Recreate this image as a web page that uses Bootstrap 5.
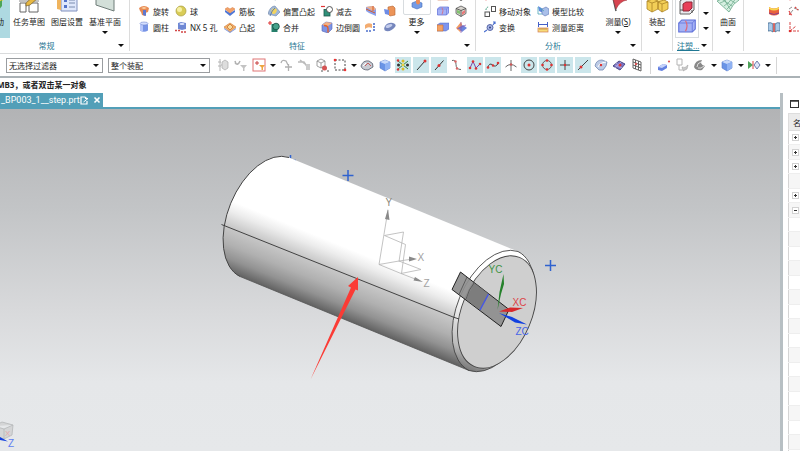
<!DOCTYPE html>
<html lang="zh">
<head>
<meta charset="utf-8">
<meta name="viewport" content="width=device-width, initial-scale=1">
<title>NX - _BP003_1__step.prt</title>
<link href="https://cdn.jsdelivr.net/npm/bootstrap@5.3.0/dist/css/bootstrap.min.css" rel="stylesheet">
<style>
body{font-family:"Noto Sans","Noto Sans CJK SC",sans-serif;font-size:8px;line-height:11px;color:#222;background:#fff}
button{background:none;border:0;padding:0;color:inherit;font:inherit;white-space:nowrap}
svg{display:block;flex:none}
.tri{width:0;height:0;border:3px solid transparent;border-top-color:#111;border-bottom:0;flex:none}
.ribbon{height:54px;border-bottom:1px solid #d9dbdc;overflow:hidden}
.grp{border-right:1px solid #dcdcdc;height:51px;flex:none}
.grp:last-child{border:0;flex:1 0 auto}
.grp-body{height:38px;display:flex;align-items:flex-end}
.grp-foot{height:15px;display:flex;align-items:center;color:#1f7793}
.grp-foot .tri{margin-right:5px}
.grp-foot a{color:inherit}
.g-home{width:155px;margin-left:-25px}
.g-feature{width:346px}
.g-analysis{width:166px}
.g-asm{width:31px}
.g-mold{width:40px}
.g-surf{width:31px}
.feature-cols,.analysis-cols{display:grid;padding-left:8px;align-items:end;align-content:end}
.feature-cols{grid-template-columns:37px 49px 44px 53px 44px 19px 19px 34px 18px 19px}
.analysis-cols{grid-template-columns:53px 62px 42px}
.stack-col{display:flex;flex-direction:column;padding-bottom:3px}
.stack-col button{height:16px;display:flex;align-items:center;gap:3px}
.ic{width:12px;height:12px}
.big{display:flex;flex-direction:column;align-items:center;justify-content:flex-end;width:38px;height:56px}
.big .pic{width:24px;height:24px;margin-bottom:3px}
.big i{height:11px;display:flex;align-items:center}
.big.cut{width:35px;background:#aed9e1;align-items:flex-end;padding-right:6px}
.big.narrow{width:30px}
.more .pic-box{border:1px solid #d8dcdf;border-radius:2px;padding:0 6px 4px;margin-bottom:1px}
.more .pic-box svg{width:14px;height:14px}
.more{width:27px}
.gallery{border:1px solid #d8dcdf;width:24px;display:flex;flex-direction:column;align-items:center;gap:2px;margin-left:2px;padding-bottom:2px}
.gallery svg{width:18px;height:18px}
.filterbar{height:24px;border-bottom:2px solid #aab2b6;padding-left:6px}
.filterbar select{width:97px;height:15px;border:1px solid #9a9da0;border-radius:0;padding:0 2px;font-size:8px;line-height:11px;color:#222;appearance:none;background:#fff}
.sel-box{display:grid;align-items:center;margin-right:5px}
.sel-box>*{grid-area:1/1}
.sel-box .tri{justify-self:end;margin-right:4px;pointer-events:none}
.sel-box.wide select{width:102px}
.tb{width:16px;height:16px;margin:0 1px;display:flex;align-items:center;justify-content:center;flex:none}
.tb.on{background:#cbe6eb}
.tb svg{width:14px;height:14px}
.tb-dd{width:9px;height:16px;display:flex;align-items:center;justify-content:center}
.vsep{width:1px;height:17px;background:#d6d6d6;margin:0 4px}
.prompt-line{height:15px;line-height:13px;font-weight:700;text-indent:-3px;white-space:nowrap;overflow:hidden}
.doc-tab{height:14px;background:#529fb8;color:#fff;font:9px/14px Roboto,"Noto Sans",sans-serif;width:103px;padding-left:1px}
.tabs-row{border-bottom:2px solid #529fb8;height:16px}
.scene-box{background:linear-gradient(#b2b3b5,#c3c5c7 30%,#d9dadc 60%,#e5e7e9 80%,#e6e8ea);overflow:hidden;position:relative}
.scene-box svg{position:absolute;inset:0;width:100%;height:100%}
.side{width:20px;border-left:3px solid #b7bfc3;overflow:hidden;flex:none}
.side-top{height:20px;padding:7px 0 0 7px}
.tree{margin-left:5px;border-left:1px solid #d4d4d4;width:60px;border-collapse:collapse}
.tree th{height:17px;background:#ebebeb;padding:1px 0 0 4px;font-weight:400;border:1px solid #ddd}
.tree td{height:14px;padding:0 0 0 3px;border-bottom:1px solid #eee;line-height:0}
.tree tr:nth-child(even) td{height:15px;background:#f6f6f6}
.twist{width:7px;height:7px;border:1px solid #d2d2d2;background:#fff;display:grid;place-items:center}
</style>
<script src="https://cdn.jsdelivr.net/npm/bootstrap@5.3.0/dist/js/bootstrap.bundle.min.js"></script>
</head>
<body class="d-flex flex-column vh-100 overflow-hidden">

<svg class="d-none" aria-hidden="true">
  <symbol id="revolve" viewBox="0 0 12 12"><path d="M1 3q5-4 10 0l-1 4-3 1v3l-3-1-1-3-1-1z" fill="#e88a52"/><path d="M5 5h3v6l-3-1z" fill="#5f78cf"/><path d="M3 3l3-1 3 1-3 1z" fill="#fbd3a6"/></symbol>
  <symbol id="cyl" viewBox="0 0 12 12"><path d="M2 2.500v7q4 2.500 8 0v-7z" fill="#7794e6"/><path d="M2 2.500v7l3 1.200v-8z" fill="#b7c7fa"/><ellipse cx="6" cy="2.500" rx="4" ry="1.500" fill="#d4defe" stroke="#7088d0" stroke-width=".6"/></symbol>
  <symbol id="ball" viewBox="0 0 12 12"><circle cx="6" cy="6" r="5" fill="#d9cc57" stroke="#a89c3d" stroke-width=".7"/><circle cx="4.500" cy="4.500" r="2.500" fill="#f6f0a4"/></symbol>
  <symbol id="hole" viewBox="0 0 12 12"><path d="M3 2l3-1 5 1v6l-4 1-4-1z" fill="#6f88d4"/><ellipse cx="7" cy="3" rx="2.500" ry="1" fill="#dfe6ff"/><path d="M0 9.500h5M6 11h5" stroke="#d24747" stroke-width="1.500" stroke-dasharray="2 1"/></symbol>
  <symbol id="rib" viewBox="0 0 12 12"><path d="M1 5l5 3 5-3v2l-5 4-5-4z" fill="#4f77d6"/><path d="M1 4l2.500-1.500L6 4l2.500-1.500L11 4 6 8z" fill="#f2a269" stroke="#d57436" stroke-width=".5"/></symbol>
  <symbol id="emboss" viewBox="0 0 12 12"><path d="M0 6l6-4 6 4-6 5z" fill="#f0b06c" stroke="#d3792f" stroke-width=".6"/><path d="M3 6l3-3 3 3-3 3z" fill="#f9dc9d" stroke="#c96a28" stroke-width=".7"/><path d="M0 7l6 4 6-4v1l-6 4-6-4z" fill="#7a96dd"/></symbol>
  <symbol id="offset" viewBox="0 0 12 12"><path d="M0 9q2-8 7-8l5 6-4 4z" fill="#9fb7d8" stroke="#7187a8" stroke-width=".6"/><ellipse cx="6" cy="6" rx="2.500" ry="3" fill="#f3d45e" transform="rotate(35 6 6)"/><path d="M2 11q2-6 5-8" stroke="#607fa9" fill="none"/></symbol>
  <symbol id="unite" viewBox="0 0 12 12"><rect x="3.500" y="3" width="6" height="8" fill="#26806c"/><circle cx="8" cy="5.500" r="3.300" fill="#46a18a" stroke="#14483d" stroke-width=".8"/><path d="M0 2h4M2 0v4" stroke="#df3535" stroke-width="1.100"/></symbol>
  <symbol id="subtract" viewBox="0 0 12 12"><rect x="3" y="4.500" width="6" height="6.500" fill="#2e9079" stroke="#1c564a" stroke-width=".8"/><circle cx="8.500" cy="4.500" r="3" fill="#fff" stroke="#444" stroke-width=".9"/><path d="M0 1.500h4" stroke="#df3535" stroke-width="1.200"/></symbol>
  <symbol id="blend" viewBox="0 0 12 12"><path d="M1 4l4-3 6 1v6l-4 4-6-2z" fill="#7d93e5" stroke="#5267b8" stroke-width=".6"/><path d="M1 4l4-3 6 1-4 3z" fill="#f5b184"/><path d="M3 4.500q4 0 4 3v4" stroke="#e4622a" stroke-width="1.400" fill="none"/></symbol>
  <symbol id="shell" viewBox="0 0 12 12"><path d="M1 2l7-1 3 3v7l-7-3-3-2z" fill="#8ba0ea"/><path d="M1 2l7-1 3 3-3 2z" fill="#f0b088"/><path d="M1 4l9 4M8 1v5" stroke="#d45c2c" fill="none"/></symbol>
  <symbol id="draft" viewBox="0 0 12 12"><path d="M4 2l5-1 2 2v7l-5 1-2-2z" fill="#ec9458" stroke="#b56432" stroke-width=".6"/><path d="M0 4l5 1v5l-4-1z" fill="#6e8de6"/></symbol>
  <symbol id="trim" viewBox="0 0 12 12"><path d="M0 4q3-3 7-1v4q-4-2-7 1z" fill="#f3ac70"/><path d="M1 10h6M9 2v9" stroke="#4e70cc" stroke-width="1.600" stroke-dasharray="2 1"/></symbol>
  <symbol id="pill" viewBox="0 0 12 12"><path d="M1 5q3-4 8-3 4 1 2 4-4 5-9 4-3-1-1-5z" fill="#7687bd"/><ellipse cx="5" cy="5" rx="3.500" ry="1.500" fill="#c3ccec" transform="rotate(-20 5 5)"/></symbol>
  <symbol id="slab" viewBox="0 0 12 12"><path d="M.5 4l2-2h9v6l-2 2h-9z" fill="#a5b2f5" stroke="#5b6dd8" stroke-width=".7"/><path d="M.5 4h9l2-2M9.500 4v6" stroke="#5b6dd8" fill="none" stroke-width=".5"/><path d="M5 2.500q2 3 0 7" stroke="#dd6a7a" fill="none" stroke-width=".8"/></symbol>
  <symbol id="slab2" viewBox="0 0 12 12"><path d="M0 4l3-2h9v6l-3 2H0z" fill="#7e95ef" stroke="#4f68c0" stroke-width=".5"/><path d="M0 4h6v6H0z" fill="#f3a365" stroke="#c96c34" stroke-width=".6"/></symbol>
  <symbol id="wirecube" viewBox="0 0 12 12"><path d="M1 3.500l5-2.500 5 2.500v5l-5 3-5-3z" fill="#d9d6d0" stroke="#555" stroke-width=".8"/><path d="M1 3.500l5 2 5-2M6 5.500v6" stroke="#444" fill="none" stroke-width=".8"/><path d="M7 7l3-2v3l-3 2z" fill="#e9787a"/><path d="M2 5l3 1v3l-3-1z" fill="#80c26e"/></symbol>
  <symbol id="petals" viewBox="0 0 12 12"><path d="M6 1l2 5-3 5-4-4z" fill="#f19a63"/><path d="M8 4l4 3-5 4-4-4z" fill="#6b84dc"/><path d="M6 1v11M2 8l9-4" stroke="#8c55a8" fill="none" stroke-width=".7"/></symbol>
  <symbol id="moveobj" viewBox="0 0 12 12"><rect x="1" y="7" width="4.500" height="4.500" fill="#fff" stroke="#555"/><rect x="7.500" y="1.500" width="4" height="5" fill="#fff" stroke="#555"/><path d="M2 5q0-3 3-3" stroke="#3c9a79" fill="none" stroke-dasharray="1.500 1"/></symbol>
  <symbol id="transform" viewBox="0 0 12 12"><circle cx="6" cy="6.500" r="3" fill="#a8b6e8" stroke="#3d4c93" stroke-width=".8"/><circle cx="6" cy="6.500" r="1" fill="#33407c"/><path d="M0 11l3-2M9 4l2-3M9 1h2v2" stroke="#4c71d0" fill="none" stroke-width="1.200"/></symbol>
  <symbol id="compare" viewBox="0 0 12 12"><path d="M1 1l5 3v4L2 6z" fill="#5f8be0"/><path d="M5 4l4-2 3 2v5l-4 2-3-2z" fill="#a9bfe9" stroke="#5b74b4" stroke-width=".6"/><path d="M1 2v7h4M3 3l4 3" stroke="#4aa3b6" fill="none" stroke-width=".8"/></symbol>
  <symbol id="distance" viewBox="0 0 12 12"><path d="M1.500 1v5M10.500 1v5M1.500 3.500h9" stroke="#4460c8" stroke-width="1"/><rect x="1" y="7" width="10" height="4" fill="#f8dc78" stroke="#d27d56" stroke-width=".7"/><path d="M3 7v2M5 7v2M7 7v2M9 7v2" stroke="#a66a33" stroke-width=".6"/></symbol>
  <symbol id="sheet" viewBox="0 0 12 12"><path d="M1 2q5 3 10 0v7q-5 3-10 0z" fill="#e9623d"/><path d="M1 2q5 3 10 0v2q-5 3-10 0z" fill="#f8d84f"/><path d="M1 8q5 3 10 0" stroke="#8b3c89" fill="none"/></symbol>
  <symbol id="book" viewBox="0 0 12 12"><path d="M0 2q3-1 5 1v8q-2-2-5-1zM12 2Q9 1 7 3v8q2-2 5-1z" fill="#a9cae8" stroke="#41688e" stroke-width=".8"/><path d="M6 2v9" stroke="#d84b42" stroke-width="1.500"/></symbol>
  <symbol id="sketchred" viewBox="0 0 12 12"><path d="M1 10L5 5M6 3l5 2M1 4l3-2" stroke="#777" fill="none" stroke-width=".8"/><path d="M1 9h3M7 2l3 3M1 6l3 5" stroke="#df4343" stroke-width="1.300" fill="none" stroke-dasharray="2 1"/></symbol>
  <symbol id="axesred" viewBox="0 0 12 12"><path d="M2 1v9h9M2 10l6-5" stroke="#d84747" fill="none" stroke-dasharray="3 1"/><circle cx="2" cy="10" r="1.300" fill="#d33"/></symbol>

  <symbol id="p-task" viewBox="0 0 24 24"><path d="M2 2h8M2 12h20" stroke="#888"/><path d="M3 14h6v9H3zM12 14h9v9h-9z" fill="#fff" stroke="#666"/><path d="M9 14L18 6l3 3-8 7-4 1z" fill="#e7b842" stroke="#7a602a" stroke-width=".7"/></symbol>
  <symbol id="p-layer" viewBox="0 0 24 24"><path d="M6 5h16v17H6z" fill="#dfe7fb" stroke="#8090bd"/><path d="M2 11l4-2v12l-4-1z" fill="#f0b45d"/><path d="M9 10h3v3H9zM9 16h3v3H9z" fill="#5372c8"/><path d="M14 11h6M14 14h6M14 18h6" stroke="#7b8cae"/></symbol>
  <symbol id="p-plane" viewBox="0 0 24 24"><path d="M3 6l18-4v20L3 16z" fill="#d3dfd9" stroke="#6f7c78"/></symbol>
  <symbol id="p-flag" viewBox="0 0 24 24"><path d="M6 5l4 17" stroke="#555" stroke-width="1.500"/><path d="M6 6q6 3 15 5-7 1-11 9z" fill="#d84450" stroke="#9f3a41" stroke-width=".6"/></symbol>
  <symbol id="p-box" viewBox="0 0 24 24"><path d="M8 4l8-2 4 2v9l-8 2-4-2z" fill="#f6dc77" stroke="#b98f2d" stroke-width=".8"/><path d="M2 12l6-2 5 2v8l-6 3-5-3zM13 13l6-2 4 2v7l-6 3-4-3z" fill="#f3cf57" stroke="#ab8427" stroke-width=".8"/><path d="M2 12l5 2 6-2M7 14v9M13 13l4 2 6-2M17 15v8" stroke="#ab8427" fill="none" stroke-width=".8"/></symbol>
  <symbol id="p-mesh" viewBox="0 0 24 24"><path d="M1 12q7-2 10-9l12 8q-6 3-10 12z" fill="#d5efe0" stroke="#66a686" stroke-width=".8"/><path d="M4 14q7-2 10-9M8 17q6-3 9-10M11 20q5-4 9-11M4 9l12 8M7 6l12 8M8 10l6 10" stroke="#66a686" fill="none" stroke-width=".7"/></symbol>
  <symbol id="p-more" viewBox="0 0 14 14"><path d="M2 7l5-2 5 2v4l-5 2-5-2z" fill="#739be6" stroke="#476fb8" stroke-width=".6"/><ellipse cx="8" cy="5.500" rx="2" ry="3" fill="#ec8c56"/></symbol>
  <symbol id="p-mold" viewBox="0 0 18 18"><path d="M2 4l4-3h10v12l-4 4H2z" fill="#e9e9ee" stroke="#666"/><path d="M5 7l3-2h6v6l-3 3H5z" fill="#e83f5a" stroke="#8d2836"/><path d="M2 13h3M14 13v3" stroke="#555"/></symbol>

  <symbol id="t-g1" viewBox="0 0 14 14"><path d="M4 1v12M2 4h3M2 8h3M5 7h3" stroke="#b4b4b4" fill="none"/><path d="M6 4l3-2 3 2v6l-3 2-3-2z" fill="#ddd" stroke="#aaa" stroke-width=".7"/></symbol>
  <symbol id="t-g2" viewBox="0 0 14 14"><path d="M1 5q3 3 5-2M1 3l1 3" stroke="#b1b1b1" fill="none" stroke-width="1.500"/><path d="M6 7h7l-2.500 3v3H9v-3z" fill="#c3c3c3"/></symbol>
  <symbol id="t-filter" viewBox="0 0 14 14"><rect x="1" y="1" width="12" height="12" fill="#fff" stroke="#df7474"/><path d="M3 5h4M5 3v4" stroke="#c94040"/><path d="M7 7h6L11 9.500V12H9.500V9.500z" fill="#eda43f"/></symbol>
  <symbol id="t-g3" viewBox="0 0 14 14"><path d="M2 5q1-4 5-2l2 4M6 9h7M9.500 6v7" stroke="#b0b0b0" fill="none" stroke-width="1.300"/></symbol>
  <symbol id="t-g4" viewBox="0 0 14 14"><path d="M1 4h6l4 6M3 2l5 4" stroke="#bbb" fill="none" stroke-width="1.500"/><path d="M9 6h4v6H9z" fill="#ccc"/></symbol>
  <symbol id="t-pick" viewBox="0 0 14 14"><path d="M2 3l4-2 4 2v5l-4 2-4-2z" fill="#fff" stroke="#888" stroke-width=".8"/><path d="M2 3l4 2 4-2M6 5v5" stroke="#888" fill="none" stroke-width=".8"/><circle cx="9.500" cy="10" r="2.500" fill="#d45454"/><path d="M6 13h2M12 13h2" stroke="#555"/></symbol>
  <symbol id="t-rect" viewBox="0 0 14 14"><rect x="2" y="2" width="10" height="10" fill="none" stroke="#444" stroke-dasharray="2 1.500"/><circle cx="2" cy="2" r="1.300" fill="#e33"/><circle cx="12" cy="12" r="1.300" fill="#e33"/></symbol>
  <symbol id="t-dome" viewBox="0 0 14 14"><path d="M1 8q2-6 8-5 5 2 4 6l-5 3q-6 0-7-4z" fill="#c8ccd4" stroke="#555c6b" stroke-width=".8"/><path d="M5 8l3-3 3 3" stroke="#c55e5e" fill="none"/><path d="M3 8l3-3" stroke="#fff"/></symbol>
  <symbol id="t-cube" viewBox="0 0 14 14"><path d="M2 4l5-2 5 2v6l-5 3-5-3z" fill="#6a94e6" stroke="#5578ca" stroke-width=".6"/><path d="M2 4l5-2 5 2-5 2z" fill="#c9dafa"/><path d="M7 6l5-2v6l-5 3z" fill="#8fb2f3"/></symbol>
  <symbol id="t-snap" viewBox="0 0 14 14"><path d="M2 3l10 8M12 3L2 11" stroke="#358a48"/><circle cx="7" cy="3" r="1.500" fill="#d9bb27"/><circle cx="7" cy="11" r="1.500" fill="#d9bb27"/><circle cx="11.500" cy="7" r="1.500" fill="#333"/><circle cx="2.500" cy="7" r="1.500" fill="#333"/><circle cx="2" cy="2.500" r="1.200" fill="#d33"/><circle cx="2" cy="11.500" r="1.200" fill="#d33"/><circle cx="7" cy="7" r="1.400" fill="#e7d13d"/></symbol>
  <symbol id="t-end" viewBox="0 0 14 14"><path d="M3 12L11 3" stroke="#333"/><circle cx="11" cy="3" r="1.500" fill="#d33"/></symbol>
  <symbol id="t-mid" viewBox="0 0 14 14"><path d="M3 12L11.500 2.500" stroke="#333"/><circle cx="7" cy="7.500" r="1.500" fill="#d33"/></symbol>
  <symbol id="t-ctrl" viewBox="0 0 14 14"><path d="M2 2.500q4-1 4 4 0 5 5 5" stroke="#666" fill="none"/><circle cx="5.500" cy="3.500" r="1.200" fill="#d66"/><circle cx="7" cy="10.500" r="1.200" fill="#d66"/></symbol>
  <symbol id="t-poly" viewBox="0 0 14 14"><path d="M2 10L5 3.500l3 6.500 4-4" stroke="#7844ac" fill="none"/><g fill="#d33"><circle cx="2" cy="10" r="1.300"/><circle cx="5" cy="3.500" r="1.300"/><circle cx="8" cy="10.500" r="1.300"/><circle cx="12" cy="6" r="1.300"/></g></symbol>
  <symbol id="t-spl" viewBox="0 0 14 14"><path d="M1.500 10q2-6 5-3 3 3 6-2" stroke="#444" fill="none"/><g fill="#d33"><circle cx="2" cy="9.500" r="1.300"/><circle cx="7" cy="7.500" r="1.200"/><circle cx="12" cy="5" r="1.300"/></g></symbol>
  <symbol id="t-int" viewBox="0 0 14 14"><path d="M1.500 9q5-5 11 0M7 2v11" stroke="#666" fill="none"/><circle cx="7" cy="6.500" r="1.200" fill="#c55"/></symbol>
  <symbol id="t-cen" viewBox="0 0 14 14"><circle cx="7" cy="7" r="5" fill="none" stroke="#444"/><circle cx="7" cy="7" r="1.500" fill="#d33"/></symbol>
  <symbol id="t-quad" viewBox="0 0 14 14"><circle cx="7" cy="7" r="4.500" fill="none" stroke="#666"/><g fill="#d33"><circle cx="7" cy="2.500" r="1.300"/><circle cx="7" cy="11.500" r="1.300"/><circle cx="2.500" cy="7" r="1.300"/><circle cx="11.500" cy="7" r="1.300"/></g></symbol>
  <symbol id="t-plus" viewBox="0 0 14 14"><path d="M7 2v10M2 7h10" stroke="#444"/><circle cx="7" cy="7" r="1.200" fill="#d33"/></symbol>
  <symbol id="t-pt" viewBox="0 0 14 14"><path d="M2 12L12 2" stroke="#444"/><circle cx="5" cy="9" r="1.500" fill="#d33"/></symbol>
  <symbol id="t-face" viewBox="0 0 14 14"><path d="M1 8q1-6 7-6l5 2q0 4-4 8H5z" fill="#bccbe6" stroke="#7488b2" stroke-width=".8"/><path d="M4 9q1-4 8-5" stroke="#fff" fill="none"/><circle cx="7" cy="7" r="1.200" fill="#d33"/></symbol>
  <symbol id="t-mesh" viewBox="0 0 14 14"><path d="M1 8l6-5 6 3-5 6z" fill="#7a74c6" stroke="#4a4a86"/><path d="M3 10l6-6M4 5l6 5M3 7l6 3" stroke="#c3b9e6" stroke-width=".7"/><circle cx="8" cy="7" r="1.500" fill="#d33"/></symbol>
  <symbol id="t-grid" viewBox="0 0 14 14"><path d="M3 1l8 3v9l-8-3zM3 4l8 3M3 7l8 3M5.500 2v9M8.500 3v9" stroke="#555" fill="none" stroke-width=".9"/><circle cx="6" cy="6" r="1.200" fill="#d55"/></symbol>
  <symbol id="t-block" viewBox="0 0 14 14"><path d="M1 9l5-3 4 1v3l-5 3-4-1z" fill="#6480e0"/><path d="M1 9l5-3 4 1-5 3z" fill="#c7d2fa"/><circle cx="12" cy="3.500" r="1.100" fill="#d55"/></symbol>
  <symbol id="t-doc" viewBox="0 0 14 14"><path d="M2 1h5v6H2zM4 7v5h3" fill="none" stroke="#b5b5b5"/><path d="M7 9q3 2 6-2l-1 4-4 2z" fill="#c9c9c9" stroke="#999" stroke-width=".5"/></symbol>
  <symbol id="t-shell" viewBox="0 0 14 14"><path d="M1 9q1-7 8-7-3 4 3 6l-3 4q-6 1-8-3z" fill="#888"/><path d="M4 9q0-4 4-5M5 10q3 1 6-2" stroke="#ddd" fill="none"/></symbol>
  <symbol id="t-conv" viewBox="0 0 14 14"><path d="M1 3l5 4-5 4z" fill="#4fa35a"/><path d="M6 3v8" stroke="#d44"/><path d="M10 3l3 4-3 4-3-4z" fill="#dee5fa" stroke="#6d7cae"/></symbol>
</svg>

<header class="ribbon d-flex flex-shrink-0">
  <section class="grp g-home">
    <div class="grp-body">
      <button class="big cut"><svg class="pic" viewBox="0 0 24 24"><path d="M2 14L18 1l6 6-8 16z" fill="#4a8ec9"/><path d="M16 5l6-3 2 8-7 8z" fill="#f0cf3a"/><path d="M16 15l6-4v6l-5 6z" fill="#4ca557"/></svg>拉动<i></i></button>
      <button class="big"><svg class="pic"><use href="#p-task"/></svg>任务草图<i></i></button>
      <button class="big"><svg class="pic"><use href="#p-layer"/></svg>图层设置<i></i></button>
      <button class="big"><svg class="pic"><use href="#p-plane"/></svg>基准平面<i><span class="tri"></span></i></button>
    </div>
    <div class="grp-foot"><span class="flex-grow-1 text-center">常规</span><span class="tri"></span></div>
  </section>

  <section class="grp g-feature">
    <div class="grp-body feature-cols">
      <div class="stack-col"><button><svg class="ic"><use href="#cyl"/></svg></button><button><svg class="ic"><use href="#revolve"/></svg>旋转</button><button><svg class="ic"><use href="#cyl"/></svg>圆柱</button></div>
      <div class="stack-col"><button><svg class="ic"><use href="#cyl"/></svg></button><button><svg class="ic"><use href="#ball"/></svg>球</button><button><svg class="ic"><use href="#hole"/></svg>NX 5 孔</button></div>
      <div class="stack-col"><button><svg class="ic"><use href="#rib"/></svg></button><button><svg class="ic"><use href="#rib"/></svg>筋板</button><button><svg class="ic"><use href="#emboss"/></svg>凸起</button></div>
      <div class="stack-col"><button><svg class="ic"><use href="#offset"/></svg></button><button><svg class="ic"><use href="#offset"/></svg>偏置凸起</button><button><svg class="ic"><use href="#unite"/></svg>合并</button></div>
      <div class="stack-col"><button><svg class="ic"><use href="#slab"/></svg></button><button><svg class="ic"><use href="#subtract"/></svg>减去</button><button><svg class="ic"><use href="#blend"/></svg>边倒圆</button></div>
      <div class="stack-col"><button><svg class="ic"><use href="#slab"/></svg></button><button><svg class="ic"><use href="#shell"/></svg></button><button><svg class="ic"><use href="#trim"/></svg></button></div>
      <div class="stack-col"><button><svg class="ic"><use href="#slab"/></svg></button><button><svg class="ic"><use href="#draft"/></svg></button><button><svg class="ic"><use href="#pill"/></svg></button></div>
      <button class="big more"><span class="pic-box"><svg><use href="#p-more"/></svg></span>更多<i><span class="tri"></span></i></button>
      <div class="stack-col"><button><svg class="ic"><use href="#distance"/></svg></button><button><svg class="ic"><use href="#slab"/></svg></button><button><svg class="ic"><use href="#slab2"/></svg></button></div>
      <div class="stack-col"><button><svg class="ic"><use href="#wirecube"/></svg></button><button><svg class="ic"><use href="#wirecube"/></svg></button><button><svg class="ic"><use href="#petals"/></svg></button></div>
    </div>
    <div class="grp-foot"><span class="flex-grow-1 text-center">特征</span><span class="tri"></span></div>
  </section>

  <section class="grp g-analysis">
    <div class="grp-body analysis-cols">
      <div class="stack-col"><button><svg class="ic"><use href="#axesred"/></svg></button><button><svg class="ic"><use href="#moveobj"/></svg>移动对象</button><button><svg class="ic"><use href="#transform"/></svg>变换</button></div>
      <div class="stack-col"><button><svg class="ic"></svg></button><button><svg class="ic"><use href="#compare"/></svg>模型比较</button><button><svg class="ic"><use href="#distance"/></svg>测量距离</button></div>
      <button class="big"><svg class="pic"><use href="#p-flag"/></svg><span>测量(<u>S</u>)</span><i><span class="tri"></span></i></button>
    </div>
    <div class="grp-foot"><span class="flex-grow-1 text-center">分析</span><span class="tri"></span></div>
  </section>

  <section class="grp g-asm"><div class="grp-body"><button class="big narrow"><svg class="pic"><use href="#p-box"/></svg>装配<i><span class="tri"></span></i></button></div></section>

  <section class="grp g-mold">
    <div class="grp-body">
      <div class="gallery"><svg><use href="#p-mold"/></svg><svg viewBox="0 0 12 12"><use href="#slab"/></svg></div>
      <div class="d-flex flex-column gap-2 ps-1 pb-2"><span class="tri"></span><span class="tri mt-1"></span></div>
    </div>
    <div class="grp-foot"><a href="#" class="flex-grow-1 ps-1">注塑...</a><span class="tri"></span></div>
  </section>

  <section class="grp g-surf"><div class="grp-body"><button class="big narrow"><svg class="pic"><use href="#p-mesh"/></svg>曲面<i><span class="tri"></span></i></button></div></section>

  <section class="grp">
    <div class="grp-body ps-4 gap-2">
      <div class="stack-col"><button><svg class="ic"><use href="#sheet"/></svg></button><button><svg class="ic"><use href="#sheet"/></svg></button><button><svg class="ic"><use href="#book"/></svg></button></div>
      <div class="stack-col"><button><svg class="ic"><use href="#axesred"/></svg></button><button><svg class="ic"><use href="#sketchred"/></svg></button><button><svg class="ic"><use href="#axesred"/></svg></button></div>
    </div>
  </section>
</header>

<div class="filterbar d-flex align-items-center flex-shrink-0">
  <label class="sel-box"><select aria-label="类型过滤器"><option>无选择过滤器</option></select><span class="tri"></span></label>
  <label class="sel-box wide me-1"><select aria-label="选择范围"><option>整个装配</option></select><span class="tri"></span></label>
  <button class="tb"><svg><use href="#t-g1"/></svg></button>
  <button class="tb"><svg><use href="#t-g2"/></svg></button>
  <button class="tb"><svg><use href="#t-filter"/></svg></button>
  <button class="tb-dd"><span class="tri"></span></button>
  <button class="tb"><svg><use href="#t-g3"/></svg></button>
  <button class="tb"><svg><use href="#t-g4"/></svg></button>
  <button class="tb"><svg><use href="#t-pick"/></svg></button>
  <button class="tb"><svg><use href="#t-rect"/></svg></button>
  <button class="tb-dd"><span class="tri"></span></button>
  <button class="tb"><svg><use href="#t-dome"/></svg></button>
  <button class="tb"><svg><use href="#t-cube"/></svg></button>
  <button class="tb on"><svg><use href="#t-snap"/></svg></button>
  <button class="tb on"><svg><use href="#t-end"/></svg></button>
  <button class="tb on"><svg><use href="#t-mid"/></svg></button>
  <button class="tb"><svg><use href="#t-ctrl"/></svg></button>
  <button class="tb on"><svg><use href="#t-poly"/></svg></button>
  <button class="tb on"><svg><use href="#t-spl"/></svg></button>
  <button class="tb"><svg><use href="#t-int"/></svg></button>
  <button class="tb on"><svg><use href="#t-cen"/></svg></button>
  <button class="tb on"><svg><use href="#t-quad"/></svg></button>
  <button class="tb on"><svg><use href="#t-plus"/></svg></button>
  <button class="tb on"><svg><use href="#t-pt"/></svg></button>
  <button class="tb"><svg><use href="#t-face"/></svg></button>
  <button class="tb"><svg><use href="#t-mesh"/></svg></button>
  <button class="tb"><svg><use href="#t-grid"/></svg></button>
  <span class="vsep"></span>
  <button class="tb"><svg><use href="#t-block"/></svg></button>
  <button class="tb"><svg><use href="#t-doc"/></svg></button>
  <button class="tb"><svg><use href="#t-shell"/></svg></button>
  <button class="tb-dd"><span class="tri"></span></button>
  <button class="tb"><svg><use href="#t-cube"/></svg></button>
  <button class="tb-dd"><span class="tri"></span></button>
  <button class="tb"><svg><use href="#t-conv"/></svg></button>
  <button class="tb-dd"><span class="tri"></span></button>
  <span class="vsep"></span>
</div>

<div class="prompt-line flex-shrink-0">MB3，或者双击某一对象</div>

<main class="d-flex flex-grow-1 overflow-hidden">
  <div class="d-flex flex-column flex-grow-1">
    <div class="tabs-row">
      <div class="doc-tab d-flex align-items-center">
        <span class="flex-grow-1">_BP003_1__step.prt</span>
        <svg class="me-1" width="9" height="9" viewBox="0 0 9 9"><path d="M5 1H1v7h6V5M5 1l2 2" fill="none" stroke="#fff" stroke-width="1.200"/><path d="M3.500 6L8 2.500M5 2.500h3" stroke="#fff" fill="none"/></svg>
        <button class="me-1" aria-label="关闭"><svg width="8" height="8" viewBox="0 0 8 8"><path d="M1.500 1.500l5 5M6.500 1.500l-5 5" stroke="#fff" stroke-width="1.600"/></svg></button>
      </div>
    </div>
    <div class="scene-box flex-grow-1">
      <svg viewBox="0 109 780 342" preserveAspectRatio="xMinYMin slice" font-family="Liberation Sans, sans-serif" font-size="10">
        <defs>
          <linearGradient id="bodyShade" gradientUnits="userSpaceOnUse" x1="289" y1="157" x2="240" y2="277">
            <stop offset=".48" stop-color="#fff"/><stop offset=".56" stop-color="#ececec"/><stop offset=".67" stop-color="#c8c8c8"/><stop offset=".8" stop-color="#b0b0b0"/><stop offset=".9" stop-color="#929292"/><stop offset="1" stop-color="#606060"/>
          </linearGradient>
          <linearGradient id="rimShade" gradientUnits="userSpaceOnUse" x1="518" y1="251" x2="469" y2="371">
            <stop offset=".45" stop-color="#fff"/><stop offset=".65" stop-color="#e2e2e2"/><stop offset=".85" stop-color="#bbb"/><stop offset="1" stop-color="#777"/>
          </linearGradient>
        </defs>
        <g fill="none" stroke="#2f62cf" stroke-width="1.500"><path d="M348 170v11M342.500 175.500h11M550.500 260v11M545 265.500h11M290.500 155v6M290 160.500h6"/></g>
        <path d="M289 157.500L518 251.500 469 370.500 240 276.500A38 64.400 22.400 0 1 289 157.500z" fill="url(#bodyShade)"/>
        <path d="M289 157.500A38 64.400 22.400 0 0 240 276.500" fill="none" stroke="#444" stroke-width="1"/>
        <path d="M240 276.500L469 370.500" stroke="#555" stroke-width=".8"/>
        <path d="M518 251.500A38 64.400 22.400 0 1 469 370.500A38 64.400 22.400 0 1 518 251.500z" fill="url(#rimShade)" stroke="#444" stroke-width=".9"/>
        <ellipse cx="497" cy="312" rx="35" ry="59" transform="rotate(22.400 497 312)" fill="#cfcfcf" stroke="#444" stroke-width=".9"/>
        <path d="M221.500 224.500L453 317l6 2" stroke="#333" fill="none" stroke-width=".9"/>
        <g stroke="#b4b4b4" fill="none" stroke-width=".8">
          <path d="M379 264.500L388 210M384.500 235.500l19-3.500-4.500 29.500M384.500 235.500l21 9-4 29M379 264.500l20-3.500 14-2M379 264.500l22 9 18 7M401 273.500l20-4-22-8.500"/>
        </g>
        <path d="M388 209l-3 10 4.500 1zM417 259l-8-2.500v5zM423 282l-8-5-1.500 3.500z" fill="#8a8a8a"/>
        <g fill="#a2a2a2"><text x="385.500" y="206" fill="#8b8778">Y</text><text x="417.500" y="261">X</text><text x="423.500" y="287">Z</text></g>
        <path d="M460.500 272L509 309.500 501 326.500 452 289.500z" fill="#8e8e8e" fill-opacity=".92" stroke="#222" stroke-width="1"/>
        <path d="M474 282.500l15 11.500-9 16-14-10.500z" fill="#747474" fill-opacity=".7"/>
        <path d="M467 277l-8 17.500M474 283q-5 6-8 16" stroke="#444" stroke-width=".7" fill="none"/>
        <path d="M488.500 294L480 310" stroke="#4557e6" stroke-width="1.400"/>
        <path d="M497.500 310l2-18 4-18 .5 10-3 10z" fill="#25812b"/>
        <path d="M499 311.500l11-4 13 .5-11 4z" fill="#d6282b"/>
        <path d="M499 313l13 4 15 7.500-12-2z" fill="#1240e0"/>
        <text x="488.500" y="272.500" fill="#3f9347">YC</text><text x="512.500" y="305.500" fill="#dd4448">XC</text><text x="515.500" y="334.500" fill="#4765e8">ZC</text>
        <path d="M310.500 379.500L351 287.500 348 286 358 277V290.500L355.500 289.500z" fill="#fb3b35"/>
        <g stroke="#b5b7b9" fill="#d4d5d6" stroke-width=".8"><path d="M-6 426l8-4 11 3-1 10-8 4-10-3zM-6 426l10 3 9-4M4 429v10"/></g>
        <text x="5" y="436" font-size="8" fill="#e2aaaa">X</text>
        <path d="M0 437l8 4.500-8-1.500z" fill="#1240e0"/><text x="8" y="447" fill="#6080f0">Z</text>
      </svg>
    </div>
  </div>
  <aside class="side">
    <div class="side-top"><svg width="9" height="8" viewBox="0 0 9 8"><rect x=".5" y=".5" width="8" height="7" fill="#fff" stroke="#333"/><path d="M0 1h9" stroke="#333" stroke-width="1.500"/></svg></div>
    <table class="tree">
      <thead><tr><th>名称</th></tr></thead>
      <tbody id="treeRows"></tbody>
    </table>
  </aside>
</main>
<script>
const marks = ["+", "+", "+", "", "+", "-"];
const plus = {"+": "M1 2.500h3M2.500 1v3", "-": "M1 2.500h3"};
document.getElementById("treeRows").innerHTML = Array.from({length: 23}, (_, i) => {
  const m = marks[i];
  return "<tr><td>" + (m ? `<span class="twist"><svg width="5" height="5" viewBox="0 0 5 5"><path d="${plus[m]}" stroke="#333"/></svg></span>` : "") + "</td></tr>";
}).join("");
</script>
</body>
</html>
